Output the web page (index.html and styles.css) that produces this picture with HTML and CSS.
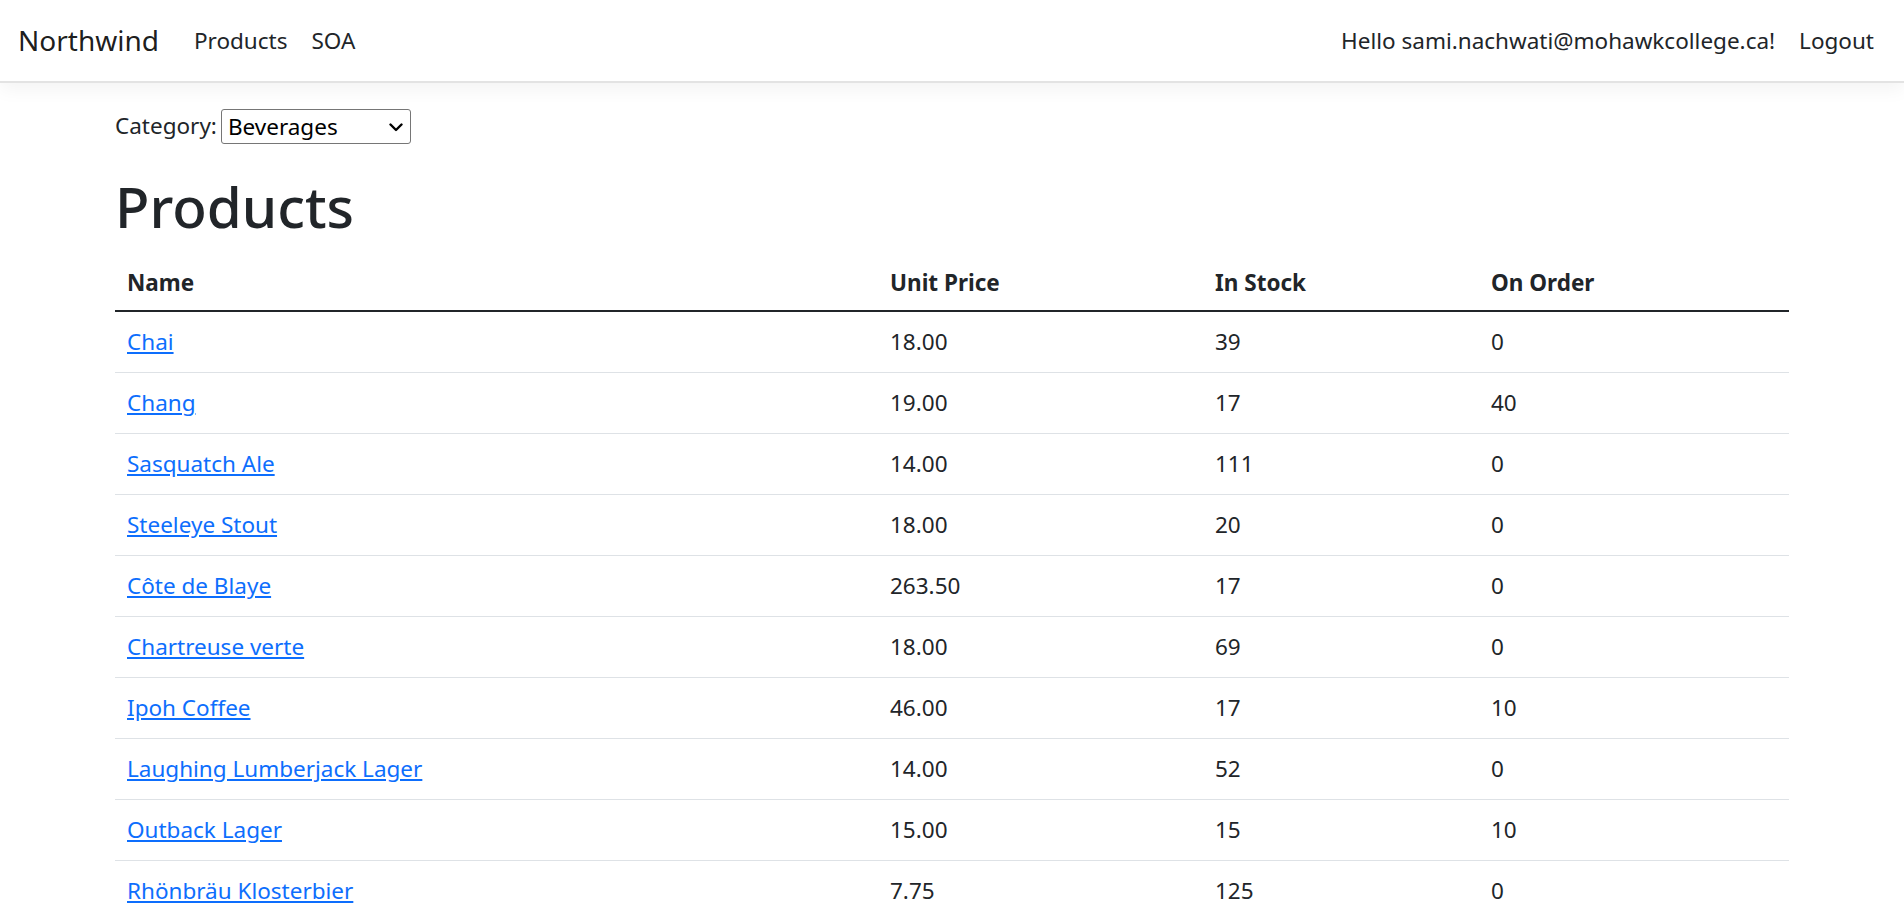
FILE: index.html
```html
<!DOCTYPE html>
<html lang="en">
<head>
<meta charset="utf-8">
<title>Products - Northwind</title>
<link rel="stylesheet" href="styles.css">
</head>
<body>
<header class="navbar">
  <div class="navbar-left">
    <a class="brand" href="#">Northwind</a>
    <nav class="nav">
      <a class="nav-link" href="#">Products</a>
      <a class="nav-link" href="#">SOA</a>
    </nav>
  </div>
  <nav class="nav">
    <a class="nav-link" href="#">Hello sami.nachwati@mohawkcollege.ca!</a>
    <a class="nav-link" href="#">Logout</a>
  </nav>
</header>
<main class="container">
  <form class="filter">
    <label class="filter-label" for="cat">Category:</label>
    <span class="select-wrap">
      <select id="cat" class="filter-select">
        <option selected>Beverages</option>
        <option>Condiments</option>
        <option>Confections</option>
        <option>Dairy Products</option>
        <option>Grains/Cereals</option>
        <option>Meat/Poultry</option>
        <option>Produce</option>
        <option>Seafood</option>
      </select>
      <svg class="select-arrow" width="14" height="9" viewBox="0 0 14 9" aria-hidden="true">
        <path d="M1.5 1.5 L7 7 L12.5 1.5" fill="none" stroke="#000" stroke-width="2.4" stroke-linecap="round" stroke-linejoin="round"/>
      </svg>
    </span>
  </form>
  <h1 class="title">Products</h1>
  <table class="table">
    <colgroup>
      <col class="col-name"><col class="col-price"><col class="col-stock"><col class="col-order">
    </colgroup>
    <thead>
      <tr><th>Name</th><th>Unit Price</th><th>In Stock</th><th>On Order</th></tr>
    </thead>
    <tbody>
      <tr><td><a href="#">Chai</a></td><td>18.00</td><td>39</td><td>0</td></tr>
      <tr><td><a href="#">Chang</a></td><td>19.00</td><td>17</td><td>40</td></tr>
      <tr><td><a href="#">Sasquatch Ale</a></td><td>14.00</td><td>111</td><td>0</td></tr>
      <tr><td><a href="#">Steeleye Stout</a></td><td>18.00</td><td>20</td><td>0</td></tr>
      <tr><td><a href="#">Côte de Blaye</a></td><td>263.50</td><td>17</td><td>0</td></tr>
      <tr><td><a href="#">Chartreuse verte</a></td><td>18.00</td><td>69</td><td>0</td></tr>
      <tr><td><a href="#">Ipoh Coffee</a></td><td>46.00</td><td>17</td><td>10</td></tr>
      <tr><td><a href="#">Laughing Lumberjack Lager</a></td><td>14.00</td><td>52</td><td>0</td></tr>
      <tr><td><a href="#">Outback Lager</a></td><td>15.00</td><td>15</td><td>10</td></tr>
      <tr><td><a href="#">Rhönbräu Klosterbier</a></td><td>7.75</td><td>125</td><td>0</td></tr>
      <tr><td><a href="#">Lakkalikööri</a></td><td>18.00</td><td>57</td><td>0</td></tr>
    </tbody>
  </table>
</main>
</body>
</html>
```
FILE: styles.css
```css
* { box-sizing: border-box; }
html, body { margin: 0; }
body {
  font-family: "Noto Sans", "Open Sans", sans-serif;
  font-size: 22.5px;
  line-height: 36px;
  color: #212529;
  background: #fff;
}
a { color: #0d6efd; }

.navbar {
  display: flex;
  justify-content: space-between;
  align-items: center;
  height: 83px;
  padding: 0 18px;
  background: #fff;
  border-bottom: 2px solid #e3e3e3;
  box-shadow: 0 6px 18px rgba(0, 0, 0, 0.05);
}
.navbar-left { display: flex; align-items: center; }
.brand {
  font-size: 28px;
  line-height: 45px;
  color: rgba(0, 0, 0, 0.9);
  text-decoration: none;
  margin-right: 23px;
}
.nav { display: flex; align-items: center; }
.nav-link {
  color: #212529;
  text-decoration: none;
  padding: 6px 12px;
}

.container {
  width: 1710px;
  margin: 25px auto 0;
  padding: 0 18px;
}
.filter {
  display: flex;
  align-items: center;
  height: 36px;
  margin: 0 0 27px;
}
.filter-label { margin-right: 4px; }
.select-wrap {
  position: relative;
  display: inline-flex;
}
.filter-select {
  -webkit-appearance: none;
  appearance: none;
  width: 190px;
  height: 35px;
  font-family: inherit;
  font-size: 22.5px;
  line-height: 33px;
  color: #000;
  background: #fff;
  border: 1px solid #767676;
  border-radius: 3px;
  padding: 0 30px 0 6px;
}
.select-arrow {
  position: absolute;
  right: 8px;
  top: 14px;
  pointer-events: none;
}
.title {
  margin: 0 0 7px;
  font-size: 56.5px;
  line-height: 72px;
  font-weight: 500;
}
.table {
  width: 100%;
  border-collapse: collapse;
  table-layout: fixed;
}
.col-name { width: 763px; }
.col-price { width: 325px; }
.col-stock { width: 276px; }
.col-order { width: 310px; }
.table th, .table td {
  text-align: left;
  padding: 12px;
  vertical-align: top;
}
.table th {
  padding: 15px 12px 9px;
  font-weight: 700;
  border-bottom: 2px solid #212529;
}
.table td { border-bottom: 1px solid #dee2e6; }
```
